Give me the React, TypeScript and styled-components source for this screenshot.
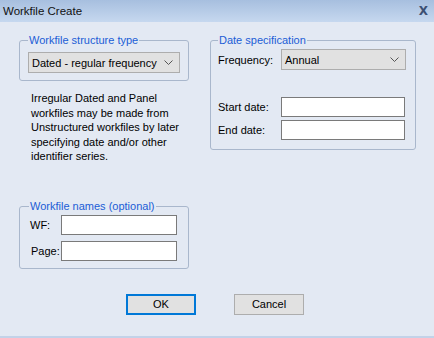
import React from 'react';
import styled, { createGlobalStyle } from 'styled-components';

const GlobalStyle = createGlobalStyle`
  html, body {
    margin: 0;
    padding: 0;
    background: #e3e9f3;
  }
  body {
    font-family: "Liberation Sans", Arial, sans-serif;
    font-size: 11px;
    color: #000;
  }
`;

const Chevron = () => (
  <svg width="9" height="5" viewBox="0 0 9 5">
    <path d="M0.5 0.5 L4.5 4.5 L8.5 0.5" fill="none" stroke="#555" strokeWidth="1" />
  </svg>
);

const App = () => {
  return (
    <Window>
      <GlobalStyle />
      <TitleBar>
        <Title>Workfile Create</Title>
        <Close>X</Close>
      </TitleBar>
      <Body>
        <Columns>
          <LeftColumn>
            <Group>
              <Legend>Workfile structure type</Legend>
              <Combo $width={152}>
                <span>Dated - regular frequency</span>
                <Chevron />
              </Combo>
            </Group>
            <Note>
              Irregular Dated and Panel workfiles may be made from Unstructured workfiles by later
              specifying date and/or other identifier series.
            </Note>
            <NamesGroup>
              <Legend>Workfile names (optional)</Legend>
              <FieldRow>
                <Label $width={32} $indent={1}>WF:</Label>
                <TextBox $width={116} />
              </FieldRow>
              <FieldRow>
                <Label $width={32} $indent={2}>Page:</Label>
                <TextBox $width={116} />
              </FieldRow>
            </NamesGroup>
          </LeftColumn>
          <DateGroup>
            <Legend>Date specification</Legend>
            <FieldRow>
              <Label $width={63}>Frequency:</Label>
              <Combo $width={125}>
                <span>Annual</span>
                <Chevron />
              </Combo>
            </FieldRow>
            <DateFields>
              <FieldRow>
                <Label $width={63}>Start date:</Label>
                <TextBox $width={124} />
              </FieldRow>
              <FieldRow>
                <Label $width={63}>End date:</Label>
                <TextBox $width={124} />
              </FieldRow>
            </DateFields>
          </DateGroup>
        </Columns>
        <ButtonRow>
          <Button $primary>OK</Button>
          <Button>Cancel</Button>
        </ButtonRow>
      </Body>
    </Window>
  );
};

export default App;

const Window = styled.div`
  width: 434px;
  height: 338px;
  box-sizing: border-box;
  border-bottom: 2px solid #c3d2e8;
  background: #e3e9f3;
  overflow: hidden;
`;

const TitleBar = styled.div`
  height: 22px;
  display: flex;
  align-items: center;
  justify-content: space-between;
  padding: 0 6px 0 3px;
  background: linear-gradient(#a7bfdf, #c6d8ef);
`;

const Title = styled.div`
  font-size: 11.5px;
  color: #111;
`;

const Close = styled.div`
  font-family: "DejaVu Sans", sans-serif;
  font-weight: bold;
  font-size: 12px;
  color: #3b4f72;
`;

const Body = styled.div`
  padding: 11px 0 0 19px;
`;

const Columns = styled.div`
  display: flex;
  gap: 21px;
  align-items: flex-start;
`;

const LeftColumn = styled.div`
  width: 170px;
  flex-shrink: 0;
  display: flex;
  flex-direction: column;
`;

const Group = styled.fieldset`
  margin: 0;
  padding: 4px 7px 7px 8px;
  border: 1px solid #a9b7cc;
  border-radius: 3px;
  min-inline-size: auto;
  box-sizing: border-box;
`;

const NamesGroup = styled(Group)`
  margin-top: 35px;
  padding: 1px 10px 7px 9px;
  display: flex;
  flex-direction: column;
  gap: 6px;
`;

const DateGroup = styled(Group)`
  width: 206px;
  height: 117px;
  flex-shrink: 0;
  padding: 1px 9px 8px 7px;
`;

const Legend = styled.legend`
  color: #1b5dd6;
  padding: 0 1px;
  margin-left: 0;
  line-height: 15px;
  white-space: nowrap;
`;

const Combo = styled.div<{ $width: number }>`
  width: ${(p) => p.$width}px;
  height: 21px;
  flex-shrink: 0;
  box-sizing: border-box;
  display: flex;
  align-items: center;
  justify-content: space-between;
  padding: 0 6px 0 3px;
  background: #e1e1e1;
  border: 1px solid #adadad;
  white-space: nowrap;
`;

const Note = styled.p`
  margin: 10px 0 0 12px;
  line-height: 14.5px;
`;

const FieldRow = styled.div`
  display: flex;
  align-items: center;
`;

const Label = styled.span<{ $width: number; $indent?: number }>`
  width: ${(p) => p.$width}px;
  flex-shrink: 0;
  padding-left: ${(p) => p.$indent ?? 0}px;
  box-sizing: border-box;
  white-space: nowrap;
`;

const TextBox = styled.div<{ $width: number }>`
  width: ${(p) => p.$width}px;
  height: 20px;
  flex-shrink: 0;
  box-sizing: border-box;
  background: #fff;
  border: 1px solid #7a7a7a;
`;

const DateFields = styled.div`
  margin-top: 27px;
  display: flex;
  flex-direction: column;
  gap: 3px;
`;

const ButtonRow = styled.div`
  display: flex;
  gap: 38px;
  margin-top: 25px;
  padding-left: 107px;
`;

const Button = styled.div<{ $primary?: boolean }>`
  width: 70px;
  height: 21px;
  box-sizing: border-box;
  display: flex;
  align-items: center;
  justify-content: center;
  background: #e1e1e1;
  border: ${(p) => (p.$primary ? '2px solid #0078d7' : '1px solid #adadad')};
`;
